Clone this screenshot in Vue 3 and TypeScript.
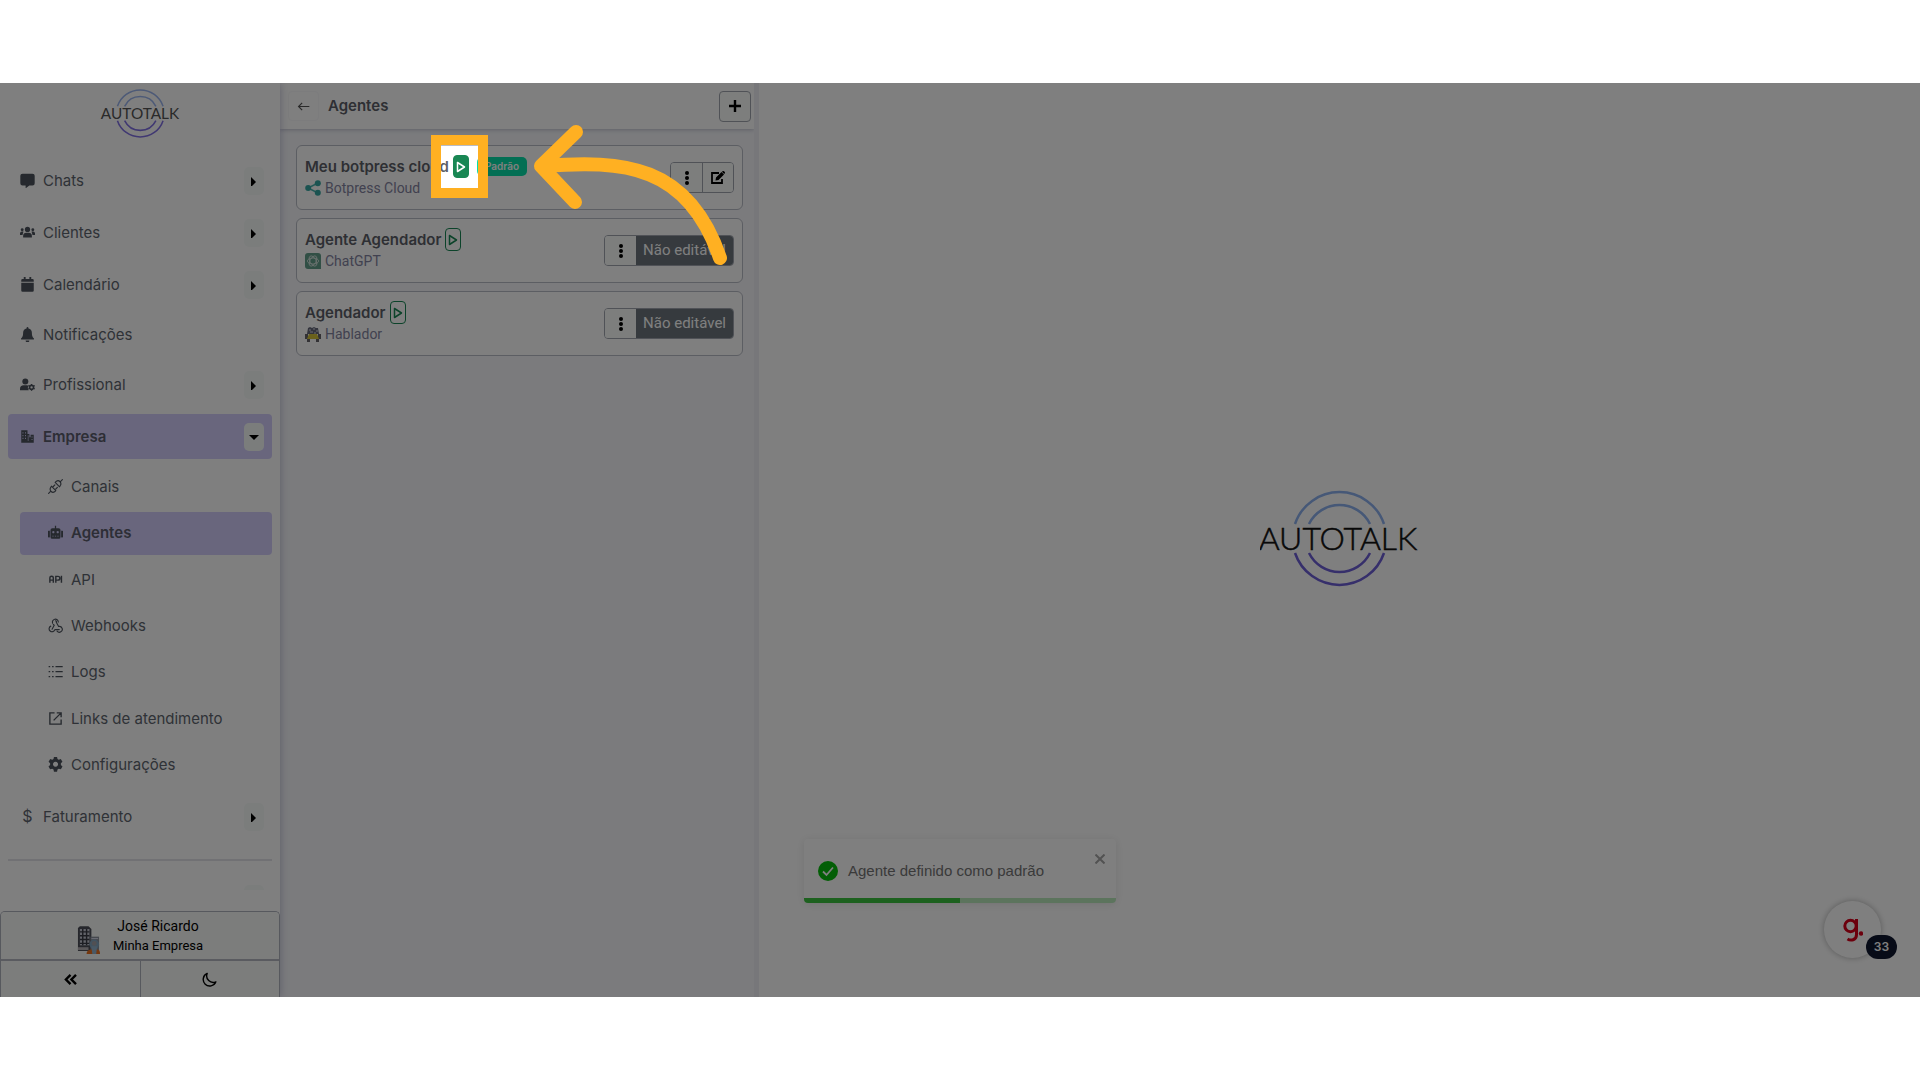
<script setup lang="ts">
import { ref } from 'vue'

type SubItem = { label: string; icon: string; active?: boolean }
type Item = { label: string; icon: string; arrow?: boolean; open?: boolean; sub?: SubItem[] }

const items = ref<Item[]>([
  { label: 'Chats', icon: 'chat', arrow: true },
  { label: 'Clientes', icon: 'users', arrow: true },
  { label: 'Calendário', icon: 'calendar', arrow: true },
  { label: 'Notificações', icon: 'bell' },
  { label: 'Profissional', icon: 'usercog', arrow: true },
  {
    label: 'Empresa', icon: 'building', arrow: true, open: true,
    sub: [
      { label: 'Canais', icon: 'plug' },
      { label: 'Agentes', icon: 'robot', active: true },
      { label: 'API', icon: 'api' },
      { label: 'Webhooks', icon: 'webhook' },
      { label: 'Logs', icon: 'logs' },
      { label: 'Links de atendimento', icon: 'external' },
      { label: 'Configurações', icon: 'gear' },
    ],
  },
  { label: 'Faturamento', icon: 'dollar', arrow: true },
])

const icons: Record<string, string> = {
  chat: '<path fill="currentColor" d="M4 1h16a3.500 3.500 0 0 1 3.500 3.500v12A3.500 3.500 0 0 1 20 20h-5l-6 4.500V20H4A3.500 3.500 0 0 1 .5 16.500v-12A3.500 3.500 0 0 1 4 1z"/>',
  users: '<g fill="currentColor"><circle cx="12" cy="7" r="4.200"/><path d="M5 20v-3a5 5 0 0 1 5-4.500h4a5 5 0 0 1 5 4.500v3z"/><circle cx="3.500" cy="7.500" r="2.300"/><circle cx="20.500" cy="7.500" r="2.300"/><path d="M0 16v-3a3 3 0 0 1 3-2.500h2.500L4 16zM24 16v-3a3 3 0 0 0-3-2.500h-2.500L20 16z"/></g>',
  calendar: '<path fill="currentColor" d="M6 0h3v3h6V0h3v3h2a2 2 0 0 1 2 2v2.500H2V5a2 2 0 0 1 2-2h2zM2 9h20v12.500a2 2 0 0 1-2 2H4a2 2 0 0 1-2-2z"/>',
  bell: '<path fill="currentColor" d="M12 0a1.500 1.500 0 0 1 1.500 1.500v1A7 7 0 0 1 19 9.500c0 5 1.200 6.500 3 8.500a1.300 1.300 0 0 1-1 2H3a1.300 1.300 0 0 1-1-2c1.800-2 3-3.500 3-8.500a7 7 0 0 1 5.500-7v-1A1.500 1.500 0 0 1 12 0zM9 21.500h6a3 3 0 0 1-6 0z"/>',
  usercog: '<g fill="currentColor"><circle cx="8.500" cy="7" r="4.800"/><path d="M0 21v-2a6 6 0 0 1 6-6h5c1 0 2 .3 2.500.7A6.500 6.500 0 0 0 14 21z"/></g><circle cx="18.500" cy="16.500" r="3.200" fill="none" stroke="currentColor" stroke-width="2.600"/><path stroke="currentColor" stroke-width="2" d="M18.500 11v2m0 7v2m-5-8.300 2 1.200m6 3.200 2 1.200m0-5.600-2 1.200m-6 3.200-2 1.200"/>',
  building: '<path fill="currentColor" fill-rule="evenodd" d="M2 2h10v6h3v5h2V9h5v13H2zM4 5v2h1.500V5zm4 0v2h1.500V5zM4 9.500v2h1.500v-2zm4 0v2h1.500v-2zM4 14v2h1.500v-2zm4 0v2h1.500v-2zM18.500 12v1.500H20V12zm0 4v1.500H20V16zM12.500 10v9h1v-9z"/>',
  plug: '<g fill="none" stroke="currentColor" stroke-width="1.800" stroke-linecap="round" stroke-linejoin="round"><path d="m1 23 3.500-3.500M19.500 4.500 23 1M5.500 11.500l7 7-2 2c-2 1.500-4 1-5.500-.5s-2-4-1-6zM18.500 12.500l-7-7 2-2c2-1.500 4-1 5.500.5s2 4 1 6zM8.500 12 11 9.500m1.500 6.500 2.500-2.500"/></g>',
  robot: '<path fill="currentColor" fill-rule="evenodd" d="M11 1h2v4h4a3 3 0 0 1 3 3v11a3 3 0 0 1-3 3H7a3 3 0 0 1-3-3V8a3 3 0 0 1 3-3h4zM0 11a1.500 1.500 0 0 1 3-1v9a1.500 1.500 0 0 1-3-1zM21 10a1.500 1.500 0 0 1 3 1v7a1.500 1.500 0 0 1-3 1zM8.500 9.500a1.800 1.800 0 1 0 .1 0zM15.500 9.500a1.800 1.800 0 1 0 .1 0zM7 17v1.500h2V17zm4 0v1.500h2V17zm4 0v1.500h2V17z"/>',
  api: '<path fill="none" stroke="currentColor" stroke-width="2.300" d="M3 17V9C3 6 8.500 6 8.500 9v8M3 13h5.500M12.500 17V7H16a3 3 0 0 1 0 6h-3.500M21.500 6v11"/>',
  webhook: '<g fill="none" stroke="currentColor" stroke-width="1.800" stroke-linejoin="round" stroke-linecap="round"><path d="M7.500 8.500a4.700 4.700 0 1 1 9-2M12 4.500a1.500 1.500 0 0 1 1.300 2.300l3.700 6.700a4.700 4.700 0 1 1-2.500 7.500M8.500 10.500l1.500 1L6.500 18M4.500 13a4.700 4.700 0 1 0 6.500 5.500h7"/></g>',
  logs: '<path stroke="currentColor" stroke-width="2" fill="none" d="M1 4h2.500M1 12h2.500M1 20h2.500M6.500 4H9M6.500 12H9M6.500 20H9M12 4h11.500M12 12h11.500M12 20h11.500"/>',
  external: '<path fill="none" stroke="currentColor" stroke-width="2.200" d="M10.500 3H3v18h18v-7.500M14 3h7v7M21 3 9 15"/>',
  gear: '<path fill="currentColor" fill-rule="evenodd" d="M9.500 0h5l.7 3.300 2 1.200 3.300-1.200 2.600 4.400-2.500 2.300v2.600l2.600 2.600-2.600 4.400-3.400-1-2 1.200-.7 3.700h-5l-.7-3.700-2-1.200-3.400 1L.8 15.200l2.600-2.600V10L.9 7.700l2.600-4.400 3.300 1.200 2-1.200zM12 7.500a4 4 0 1 0 .1 0z"/>',
}

const agents = ref([
  { name: 'Meu botpress cloud', kind: 'Botpress Cloud', icon: 'share', active: true, editable: true },
  { name: 'Agente Agendador', kind: 'ChatGPT', icon: 'gpt', active: false, editable: false },
  { name: 'Agendador', kind: 'Hablador', icon: 'hablador', active: false, editable: false },
])
</script>

<template>
  <div class="page">
    <div class="app">
      <aside class="sidebar">
        <svg class="logo" viewBox="0 0 160 100" aria-label="Autotalk">
          <g fill="none" stroke-width="3">
            <path stroke="#9ab4ee" d="M36 35a47 47 0 0 1 89 0M50 35a34 34 0 0 1 61 0" />
            <path stroke="#8070e4" d="M36 63a47 47 0 0 0 89 0M50 63a34 34 0 0 0 61 0" />
          </g>
          <text x="80" y="60" text-anchor="middle" class="logo-text">AUTOTALK</text>
        </svg>
        <nav class="nav">
          <template v-for="it in items" :key="it.label">
            <div class="row" :class="{ active: it.open, plain: !it.arrow }">
              <a href="#" class="link">
                <span v-if="it.icon === 'dollar'" class="icon dollar">$</span>
                <svg v-else class="icon" viewBox="0 0 24 24" v-html="icons[it.icon]"></svg>
                <span>{{ it.label }}</span>
              </a>
              <button v-if="it.arrow" class="toggle" :aria-label="it.label">
                <svg v-if="it.open" viewBox="0 0 10 10"><path d="M0 3h10L5 8z" /></svg>
                <svg v-else viewBox="0 0 10 10"><path d="M2 1v10l5-5z" /></svg>
              </button>
            </div>
            <div v-if="it.sub" class="sub">
              <a v-for="s in it.sub" :key="s.label" href="#" class="subrow" :class="{ active: s.active }">
                <svg class="icon" viewBox="0 0 24 24" v-html="icons[s.icon]"></svg>
                <span>{{ s.label }}</span>
              </a>
            </div>
          </template>
          <hr />
          <span class="peek"></span>
        </nav>
        <footer class="foot">
          <button class="profile">
            <svg class="avatar" viewBox="0 0 24 30">
              <path d="M1 2l2-2h9l3 3v23H1z" fill="#4c4f58" />
              <path d="M3 3h10v17H3z" fill="#c4c6d2" />
              <path d="M3 6h10M3 10h10M3 14h10M3 18h10M6 3v17M10 3v17" stroke="#3b3d47" stroke-width="1.500" />
              <path d="M14 11h9v15h-9z" fill="#8a909c" /><path d="M15 13h7" stroke="#dde" />
              <path d="M1 22h11v3H1z" fill="#b5b0b4" />
              <circle cx="18" cy="19" r="5" fill="#83a6c0" /><circle cx="18" cy="18" r="2.500" fill="#a3a0a6" />
              <path d="M10 29c0-4 3-5 8-5s6 1 6 5z" fill="#e87020" /><path d="M15 21h6l-1 8h-4z" fill="#92b2cc" />
            </svg>
            <span class="who"><span class="name">José Ricardo</span><span class="org">Minha Empresa</span></span>
          </button>
          <div class="tools">
            <button aria-label="Recolher menu">
              <svg class="chev" viewBox="0 0 14 12"><path fill="none" stroke="currentColor" stroke-width="2.600" d="M7 1 2 6l5 5M13 1 8 6l5 5" /></svg>
            </button>
            <button aria-label="Tema escuro">
              <svg class="moon" viewBox="0 0 16 16"><path fill="none" stroke="currentColor" stroke-width="1.500" stroke-linejoin="round" d="M5.500 1.500A7 7 0 1 0 14.800 10.500 7 7 0 0 1 5.500 1.500z" /></svg>
            </button>
          </div>
        </footer>
      </aside>

      <section class="panel">
        <header class="head">
          <button class="back" aria-label="Voltar">
            <svg viewBox="0 0 14 10"><path fill="none" stroke="currentColor" stroke-width="1.300" d="M13.500 5H1.500M5.500 1l-4 4 4 4" /></svg>
          </button>
          <h1>Agentes</h1>
          <button class="add" aria-label="Adicionar">
            <svg viewBox="0 0 12 12"><path stroke="currentColor" stroke-width="2.400" d="M6 0v12M0 6h12" /></svg>
          </button>
        </header>
        <div class="list">
          <article v-for="a in agents" :key="a.name" class="card">
            <div class="info">
              <div class="line">
                <h2>{{ a.name }}</h2>
                <button class="play" :class="{ on: a.active }" aria-label="Definir como padrão">
                  <svg viewBox="0 0 10 12"><path fill="none" stroke="currentColor" stroke-width="1.500" stroke-linejoin="round" d="M1.500 1.500v9L8.500 6z" /></svg>
                </button>
                <span v-if="a.active" class="badge">Padrão</span>
                <span v-if="a.active" class="spot"></span>
              </div>
              <div class="kind">
                <svg v-if="a.icon === 'share'" viewBox="0 0 16 16">
                  <path d="M13 3 3 8l10 5" fill="none" stroke="#4cb3ae" stroke-width="1.500" />
                  <g fill="#36a7a2"><circle cx="12.800" cy="3.300" r="3" /><circle cx="3.200" cy="8" r="3" /><circle cx="12.800" cy="12.700" r="3" /></g>
                </svg>
                <svg v-else-if="a.icon === 'gpt'" viewBox="0 0 16 16">
                  <path d="M3 0h10a3 3 0 0 1 3 3v13H3a3 3 0 0 1-3-3V3a3 3 0 0 1 3-3z" fill="#639e8b" />
                  <g fill="none" stroke="#dfeae6" stroke-width=".8"><ellipse cx="8" cy="8" rx="5.600" ry="3" /><ellipse cx="8" cy="8" rx="5.600" ry="3" transform="rotate(60 8 8)" /><ellipse cx="8" cy="8" rx="5.600" ry="3" transform="rotate(120 8 8)" /></g>
                </svg>
                <svg v-else viewBox="0 0 16 16">
                  <path d="M3 2l2-1 2 1 2-1 2 1h2l1 6H2z" fill="#66697a" /><path d="M4 4h2M8 3h2M11 5h2M5 6h3M9 7h2" stroke="#d9d9e2" />
                  <path d="M0 8h3v5H0zM13 8h3v5h-3zM2 13h3v3H2zM11 13h3v3h-3z" fill="#66656a" /><path d="M4 8h8l2 5H2z" fill="#d4c239" />
                </svg>
                <span>{{ a.kind }}</span>
              </div>
            </div>
            <div class="actions">
              <button class="dots" aria-label="Opções"><svg viewBox="0 0 4 14"><circle cx="2" cy="2" r="2" /><circle cx="2" cy="7" r="2" /><circle cx="2" cy="12" r="2" /></svg></button>
              <button v-if="a.editable" class="edit" aria-label="Editar">
                <svg viewBox="0 0 14 13"><path fill="none" stroke="currentColor" stroke-width="1.800" d="M8 2H1v10h10V8" /><path fill="currentColor" d="M4.500 9.500 5 6.500 10.500 1l2.500 2.500L7.500 9zM11 .8l.8-.8C12.500-.5 14.500 1.300 14 2l-.8.900z" /></svg>
              </button>
              <button v-else class="locked">Não editável</button>
            </div>
          </article>
        </div>
      </section>
      <div class="splitter"></div>

      <main class="stage">
        <svg class="biglogo" viewBox="0 0 160 100" aria-label="Autotalk">
          <g fill="none" stroke-width="2.500">
            <path stroke="#8cb0ee" d="M35 35a47 47 0 0 1 89 0M49 35a34 34 0 0 1 61 0" />
            <path stroke="#6c5ed6" d="M35 64a47 47 0 0 0 89 0M49 64a34 34 0 0 0 61 0" />
          </g>
          <text x="78" y="61" text-anchor="middle" class="logo-text dark">AUTOTALK</text>
        </svg>
      </main>

      <div class="toast" role="status">
        <svg class="ok" viewBox="0 0 20 20"><circle cx="10" cy="10" r="10" fill="#07bc0c" /><path d="m5 10.500 3.500 3.500L15 6.500" fill="none" stroke="#fff" stroke-width="1.800" /></svg>
        <span>Agente definido como padrão</span>
        <button class="close" aria-label="Fechar"><svg viewBox="0 0 10 10"><path stroke="currentColor" stroke-width="2" d="m.5.5 9 9m0-9-9 9" /></svg></button>
        <span class="bar"></span>
      </div>

      <button class="guide" aria-label="Guia">
        <svg viewBox="0 0 20 24"><g fill="none" stroke="#d8001b" stroke-width="3"><circle cx="7.500" cy="8" r="5.700" /><path d="M13.500 1v15.500c0 6-6 6.500-9 4.500" /></g><circle cx="18" cy="15.500" r="2.200" fill="#d8001b" /></svg>
        <span class="count">33</span>
      </button>
      <svg class="arrow" viewBox="0 0 196 142">
        <path fill="none" stroke="#ffb022" stroke-width="14" stroke-linecap="round" stroke-linejoin="round" d="M43 8 8 42l34 36M10 42C90 36 155 40 187 134" />
      </svg>
    </div>
  </div>
</template>

<style>
body { margin: 0; background: #fff; }
</style>

<style scoped>
* { box-sizing: border-box; }
.page { min-height: 100vh; padding: 83px 0; display: flex; font-family: Inter, "Noto Sans", sans-serif; font-size: 15px; color: #5e656e; }
.app { position: relative; flex: 1; display: flex; overflow: hidden; background: #fff; }
button { font: inherit; color: #000; padding: 0; margin: 0; border: 0; background: none; display: flex; align-items: center; justify-content: center; }
svg { display: block; }
a { color: inherit; text-decoration: none; }

.sidebar { width: 280px; flex: none; display: flex; flex-direction: column; background: #fff; box-shadow: 0 0 8px rgba(70, 70, 130, .35); z-index: 1; }
.logo { width: 82px; height: 52px; margin: 5px auto 18px; }
.logo-text { font-family: Lato, sans-serif; font-weight: 400; font-size: 30px; fill: #555; }
.logo-text.dark { font-size: 32px; font-weight: 300; fill: #111; stroke: #111; stroke-width: .5; }
.nav { flex: 1; display: flex; flex-direction: column; gap: 7px; padding: 0 8px; }
.row { height: 45px; display: flex; align-items: center; justify-content: space-between; padding: 0 8px 0 12px; border-radius: 4px; }
.row.plain { height: 41px; }
.link, .subrow { display: flex; align-items: center; gap: 8px; }
.icon { width: 15px; height: 15px; flex: none; color: #4c535d; }
.dollar { font-size: 16px; line-height: 15px; text-align: center; color: #5e656e; }
.active { background: #d2cdfa; color: #5b5c6c; font-weight: 600; }
.toggle { width: 20px; height: 28px; border-radius: 5px; background: #f7fbf9; }
.toggle svg { width: 10px; height: 10px; }
.sub { height: 321px; display: flex; flex-direction: column; justify-content: space-between; margin-left: 12px; }
.subrow { height: 43px; padding: 0 0 2px 28px; border-radius: 4px; }
hr { width: 100%; margin: 13px 0 17px; border: 0; border-top: 2px solid #e2e3e8; }
.peek { width: 20px; height: 5px; margin-right: 8px; align-self: flex-end; border-radius: 5px 5px 0 0; background: #f7fbf9; }
.foot { border: 1px solid #aeb2bc; border-bottom: 0; border-radius: 5px 5px 0 0; }
.profile { width: 100%; height: 49px; padding-top: 1px; gap: 13px; border-bottom: 2px solid #b4b7c0; border-radius: 4px 4px 0 0; background: #f8faf8; font-family: Roboto, sans-serif; }
.avatar { width: 23px; height: 29px; margin-top: 8px; }
.who { display: flex; flex-direction: column; align-items: center; line-height: 20px; }
.name { font-size: 14px; }
.org { font-size: 13px; }
.tools { display: flex; height: 36px; background: #f8faf8; }
.tools button { flex: 1; }
.tools button + button { border-left: 1px solid #aeb2bc; }
.chev { width: 13px; height: 11px; }
.moon { width: 15px; height: 15px; }

.panel { width: 474px; flex: none; background: #f6f7fb; }
.head { height: 46px; display: flex; align-items: center; padding: 0 3px 0 8px; background: #fff; box-shadow: 0 1px 4px rgba(70, 70, 110, .3); }
.back { width: 31px; height: 30px; border: 1px solid #f8f8fa; border-radius: 4px; }
.back svg { width: 13px; height: 9px; color: #555; }
h1, h2 { margin: 0; font-weight: 600; font-size: 15px; line-height: 22px; color: #5c5f68; }
h1 { margin-left: 9px; flex: 1; }
.add { width: 32px; height: 31px; border: 1px solid #a0a5ae; border-radius: 4px; background: #fafcfa; }
.add svg { width: 12px; height: 12px; }
.list { padding: 16px 11px 0 16px; display: flex; flex-direction: column; gap: 8px; }
.card { height: 65px; padding: 0 8px; display: flex; align-items: center; justify-content: space-between; border: 1px solid #b9bcc6; border-radius: 6px; background: #fff; }
.info { display: flex; flex-direction: column; padding-bottom: 2px; }
.line { position: relative; display: flex; align-items: center; gap: 4px; height: 23px; }
.play { width: 16px; height: 23px; margin-right: 4px; border: 1px solid #198754; border-radius: 4px; color: #198754; }
.play svg { width: 10px; height: 12px; }
.play.on { background: #198754; color: #fff; }
.badge { height: 19px; padding: 0 8px; border-radius: 5px; background: #06dfa9; color: #fff; font-size: 10px; line-height: 19px; font-weight: 600; }
.spot { position: absolute; left: 126px; top: -20px; width: 57px; height: 63px; border: 10px solid #ffb022; box-shadow: 0 0 0 4000px rgba(0, 0, 0, .5); z-index: 5; }
.kind { display: flex; align-items: center; gap: 4px; height: 20px; font-family: Roboto, sans-serif; font-size: 14px; color: #8383a0; }
.kind svg { width: 16px; height: 16px; }
.actions { display: flex; height: 31px; border: 1px solid #a0a5ae; border-radius: 4px; overflow: hidden; }
.dots { width: 31px; background: #fafcfa; }
.dots svg { width: 4px; height: 14px; }
.edit { width: 31px; border-left: 1px solid #a0a5ae; background: #fafcfa; }
.edit svg { width: 14px; height: 13px; }
.locked { padding: 0 7px 2px; background: #6c757d; color: #fff; font-family: Roboto, sans-serif; font-size: 15px; }
.splitter { width: 5px; flex: none; background: #eeeef4; }
.stage { flex: 1; display: flex; align-items: center; justify-content: center; padding-bottom: 2px; background: #fff; }
.biglogo { width: 160px; height: 100px; }

.toast { position: absolute; left: 804px; bottom: 94px; width: 312px; height: 64px; display: flex; align-items: center; gap: 10px; padding: 0 14px; border-radius: 4px; overflow: hidden; background: #fff; color: #757575; font: 15px/20px "Liberation Sans", sans-serif; box-shadow: 0 1px 10px rgba(0, 0, 0, .1); }
.ok { width: 20px; height: 20px; }
.close { position: absolute; right: 11px; top: 15px; color: #a4a4a4; }
.close svg { width: 10px; height: 10px; }
.bar { position: absolute; left: 0; right: 0; bottom: 0; height: 5px; background: linear-gradient(90deg, #3ac23e 50%, #b9e8ba 50%); }
.guide { position: absolute; right: 39px; bottom: 39px; width: 57px; height: 57px; border-radius: 50%; background: #fff; box-shadow: 0 0 6px rgba(0, 0, 0, .3); }
.guide svg { width: 20px; height: 24px; }
.count { position: absolute; right: -16px; bottom: -1px; width: 31px; height: 24px; border-radius: 12px; background: #0f172f; color: #fff; font-size: 12px; line-height: 24px; font-weight: 600; }
.arrow { position: absolute; left: 533px; top: 41px; width: 196px; height: 142px; z-index: 10; }
</style>
